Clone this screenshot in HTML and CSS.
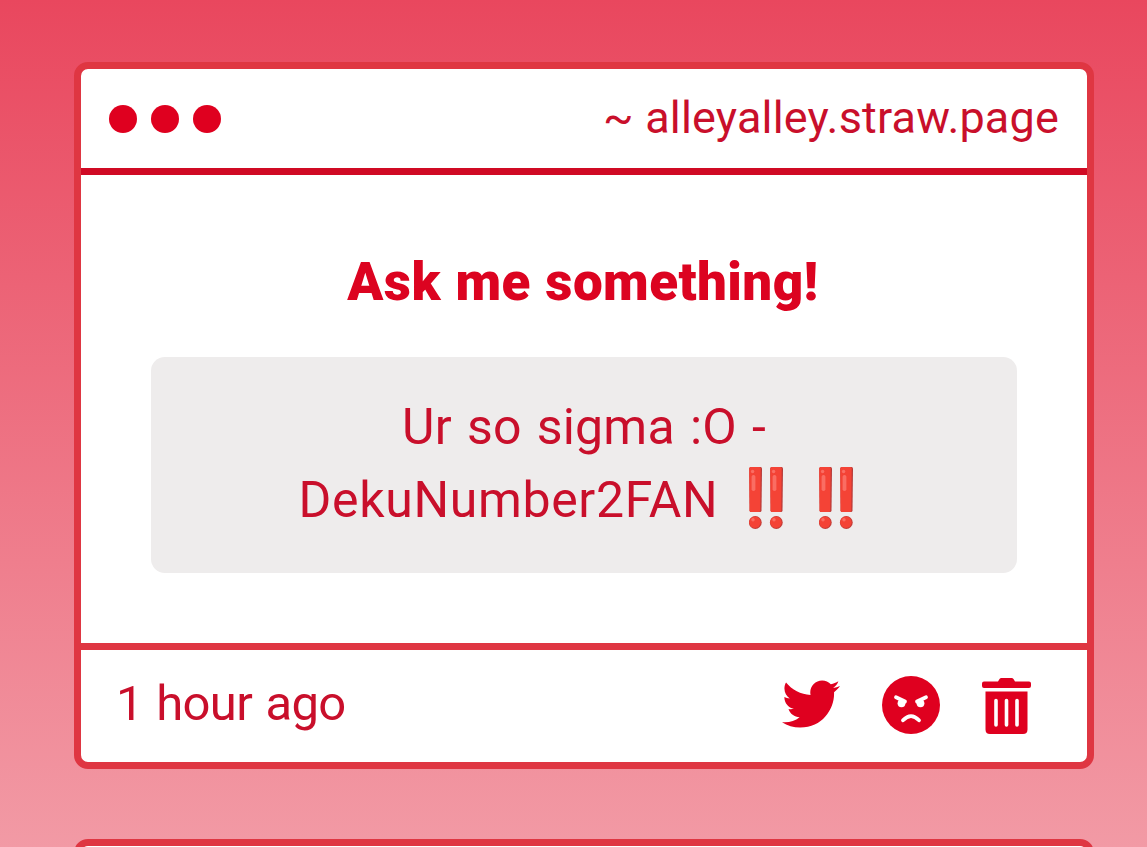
FILE: index.html
```
<!DOCTYPE html>
<html lang="en">
<head>
    <meta charset="UTF-8">
    <meta name="viewport" content="width=device-width, initial-scale=1.0">
    <title>alleyalley.straw.page</title>
    <link rel="stylesheet" href="styles.css">
</head>
<body>
    <!-- shared emoji drawing -->
    <svg class="defs" width="0" height="0">
        <symbol id="bangbang" viewBox="0 0 34 62">
            <path d="M2 0h9.500q1.500 0 1.500 1.500l-.5 42q-.1 1.500-1.600 1.500h-8.700q-1.500 0-1.600-1.500l-.4-42q0-1.500 1.800-1.500z" fill="#b83a38"/>
            <path d="M2 0h8.500q1.200 0 1.200 1.500l-.4 42q-.1 1.500-1.600 1.500h-7.500q-1.500 0-1.600-1.500l-.4-42q0-1.500 1.800-1.500z" fill="#f44336"/>
            <rect x="2.600" y="8" width="3.800" height="16" rx="1.800" fill="#fa6d63"/>
            <circle cx="3.600" cy="4.500" r="1.700" fill="#fa6d63"/>
            <circle cx="6.300" cy="55.500" r="6.400" fill="#c43c37"/>
            <circle cx="5.900" cy="55.200" r="5.700" fill="#f44336"/>
            <circle cx="4" cy="52.800" r="1.700" fill="#fa6d63"/>
            <path d="M23 0h9.500q1.500 0 1.500 1.500l-.5 42q-.1 1.500-1.600 1.500h-8.700q-1.500 0-1.600-1.500l-.4-42q0-1.500 1.800-1.500z" fill="#b83a38"/>
            <path d="M23 0h8.500q1.200 0 1.200 1.500l-.4 42q-.1 1.500-1.600 1.500h-7.500q-1.500 0-1.600-1.500l-.4-42q0-1.500 1.800-1.500z" fill="#f44336"/>
            <rect x="23.600" y="8" width="3.800" height="16" rx="1.800" fill="#fa6d63"/>
            <circle cx="24.600" cy="4.500" r="1.700" fill="#fa6d63"/>
            <circle cx="27.300" cy="55.500" r="6.400" fill="#c43c37"/>
            <circle cx="26.900" cy="55.200" r="5.700" fill="#f44336"/>
            <circle cx="25" cy="52.800" r="1.700" fill="#fa6d63"/>
        </symbol>
    </svg>

    <div class="card">
        <div class="card-header">
            <div class="dots">
                <span class="dot"></span>
                <span class="dot"></span>
                <span class="dot"></span>
            </div>
            <div class="site">~ alleyalley.straw.page</div>
        </div>
        <div class="card-body">
            <h1>Ask me something!</h1>
            <div class="message">
                <p>Ur so sigma :O -</p>
                <p class="signed"><span>DekuNumber2FAN</span>
                    <svg class="emoji"><use href="#bangbang"/></svg>
                    <svg class="emoji"><use href="#bangbang"/></svg>
                </p>
            </div>
        </div>
        <div class="card-footer">
            <div class="time">1 hour ago</div>
            <div class="actions">
                <svg class="twitter" viewBox="0 48 512 416" fill="currentColor">
                    <path d="M459.370 151.716c.325 4.548.325 9.097.325 13.645 0 138.720-105.583 298.558-298.558 298.558-59.452 0-114.680-17.219-161.137-47.106 8.447.974 16.568 1.299 25.340 1.299 49.055 0 94.213-16.568 130.274-44.832-46.132-.975-84.792-31.188-98.112-72.772 6.498.974 12.995 1.624 19.818 1.624 9.421 0 18.843-1.300 27.614-3.573-48.081-9.747-84.143-51.980-84.143-102.985v-1.299c13.969 7.797 30.214 12.670 47.431 13.319-28.264-18.843-46.781-51.005-46.781-87.391 0-19.492 5.197-37.360 14.294-52.954 51.655 63.675 129.300 105.258 216.365 109.807-1.624-7.797-2.599-15.918-2.599-24.040 0-57.828 46.782-104.934 104.934-104.934 30.213 0 57.502 12.670 76.670 33.137 23.715-4.548 46.456-13.320 66.599-25.340-7.798 24.366-24.366 44.833-46.132 57.827 21.117-2.273 41.584-8.122 60.426-16.243-14.292 20.791-32.161 39.308-52.628 54.253z"/>
                </svg>
                <svg class="angry" viewBox="0 0 58 58">
                    <circle cx="29" cy="29" r="29" fill="currentColor"/>
                    <circle cx="19.500" cy="27.300" r="3.900" fill="#fff"/>
                    <circle cx="38.500" cy="27.300" r="3.900" fill="#fff"/>
                    <path d="M14 21.300l9 4.200M44 21.300l-9 4.200M21 44.300q8-8.400 16 0" fill="none" stroke="#fff" stroke-width="3.800" stroke-linecap="round"/>
                </svg>
                <svg class="trash" viewBox="0 0 49 56">
                    <path d="M2 3.500h14l1.500-2.500q.6-1 2-1h10q1.400 0 2 1l1.500 2.500h14q2 0 2 2v2.500q0 2-2 2h-45q-2 0-2-2v-2.500q0-2 2-2zM3.500 13.500h42v38q0 4.500-4.500 4.500h-33q-4.500 0-4.500-4.500z" fill="currentColor"/>
                    <path d="M14 22.500v24.500M24.500 22.500v24.500M35 22.500v24.500" stroke="#fff" stroke-width="3.600" stroke-linecap="round"/>
                </svg>
            </div>
        </div>
    </div>

    <div class="next">
        <div class="card"></div>
    </div>
</body>
</html>
```
FILE: styles.css
```
* {
    box-sizing: border-box;
}
body {
    margin: 0;
    height: 847px;
    overflow: hidden;
    padding: 62px 53px 0 74px;
    font-family: Roboto, "Liberation Sans", sans-serif;
    color: #c90f2b;
    background: linear-gradient(to bottom, #e9475e, #f29aa5);
}
.defs {
    position: absolute;
}
.card {
    background: white;
    border: 7px solid #df3642;
    border-radius: 14px;
}
.card-header {
    display: flex;
    justify-content: space-between;
    align-items: center;
    height: 106px;
    padding: 0 28px;
    border-bottom: 7px solid #d00a24;
}
.dots {
    display: flex;
    gap: 14px;
}
.dot {
    width: 28px;
    height: 28px;
    border-radius: 50%;
    background: #df001f;
}
.site {
    font-size: 45px;
    line-height: 53px;
    letter-spacing: 0.17px;
    padding-bottom: 2px;
}
.card-body {
    height: 468px;
    padding: 69px 70px 0;
}
h1 {
    margin: 0 0 36px;
    padding-right: 2px;
    font-size: 53px;
    line-height: 77px;
    font-weight: 900;
    letter-spacing: 0.4px;
    word-spacing: 1px;
    text-align: center;
    color: #dc0320;
}
.message {
    height: 216px;
    padding: 34px 70px;
    border-radius: 14px;
    background: #eeecec;
    font-size: 50px;
    line-height: 73px;
    text-align: center;
}
.message p {
    margin: 0;
    letter-spacing: 0.2px;
    word-spacing: 2.5px;
}
.message .signed {
    display: flex;
    justify-content: center;
    padding-right: 16px;
    letter-spacing: 0.65px;
}
.emoji {
    width: 34px;
    height: 62px;
    margin: 3px 0 0 36px;
}
.signed span + .emoji {
    margin-left: 31px;
}
.card-footer {
    display: flex;
    justify-content: space-between;
    align-items: center;
    height: 119px;
    padding: 0 56px 0 35px;
    border-top: 7px solid #df3642;
}
.time {
    font-size: 49px;
    line-height: 57px;
    letter-spacing: -0.7px;
    word-spacing: 2px;
    padding-bottom: 5px;
}
.actions {
    display: flex;
    align-items: center;
    gap: 42px;
    color: #df001f;
}
.twitter {
    width: 58px;
    height: 48px;
    margin-bottom: 4px;
}
.angry {
    width: 58px;
    height: 58px;
    margin-bottom: 2px;
}
.trash {
    width: 49px;
    height: 56px;
}
/* top edge of the following ask */
.next {
    height: 8px;
    margin-top: 70px;
    overflow: hidden;
}
.next .card {
    height: 60px;
}
```
